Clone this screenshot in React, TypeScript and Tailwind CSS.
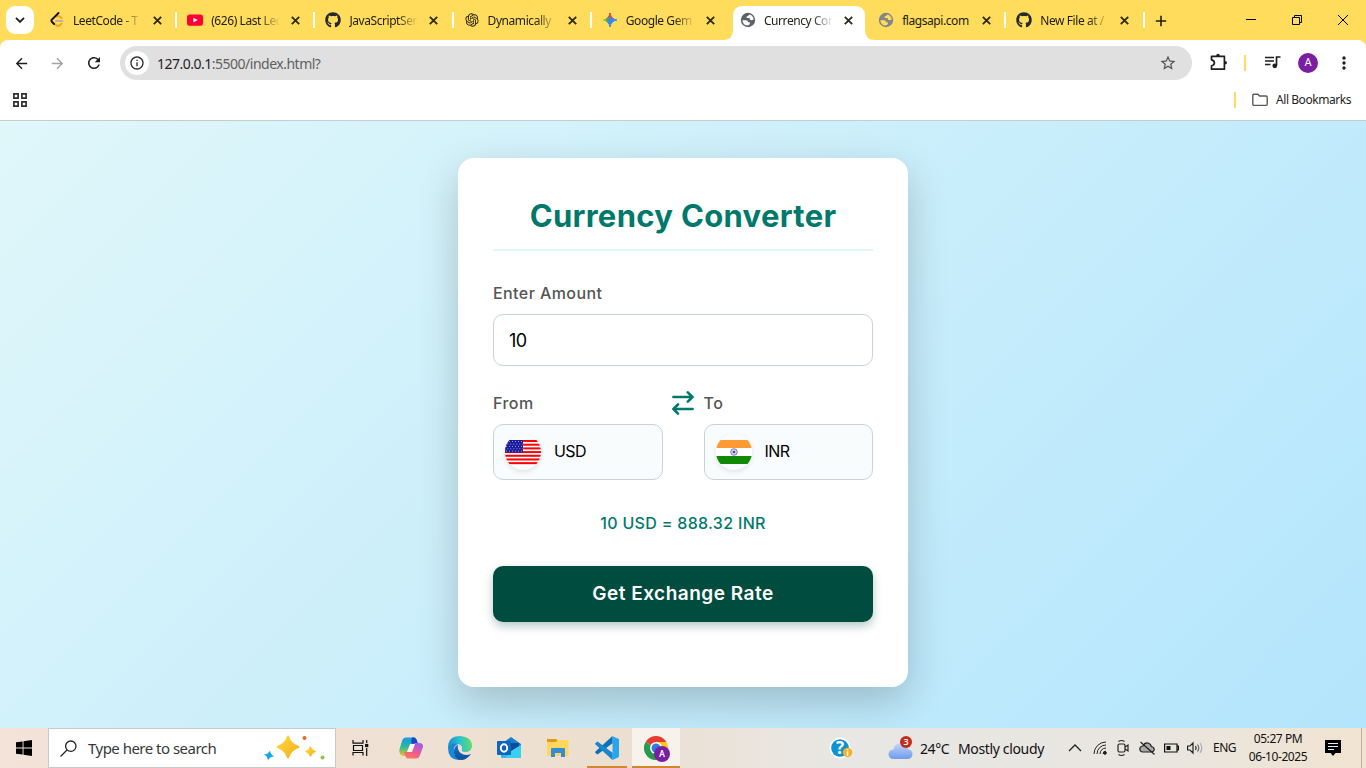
import React from "react";
import { FaGithub } from "react-icons/fa";
import { RiOpenaiFill } from "react-icons/ri";
import {
  MdArrowBack,
  MdArrowForward,
  MdRefresh,
  MdStarBorder,
  MdMoreVert,
  MdAdd,
  MdOutlineInfo,
} from "react-icons/md";

const LeetIcon = () => (
  <svg width="16" height="16" viewBox="0 0 16 16" fill="none" strokeLinecap="round" strokeWidth="1.9">
    <path d="M12.6 6.2 10.9 4.6Q9 3.400 7.500 4.600" stroke="#f5a31a" />
    <path d="M12.500 11.600 10.800 13.200Q9 14.600 7 13.200L3.500 10" stroke="#f5a31a" />
    <path d="M9.500 1 2.700 7.800Q1.900 9 3.200 10.200L5 12" stroke="#111" />
    <path d="M7 9H13.500" stroke="#b9b3a6" />
  </svg>
);
const YoutubeIcon = () => (
  <svg width="16" height="16" viewBox="0 0 16 16">
    <rect x="0" y="2.400" width="16" height="11.300" rx="2.800" fill="#ff0033" />
    <path d="M6.400 5.700 10.600 8 6.400 10.400Z" fill="#fff" />
  </svg>
);
const GeminiIcon = () => (
  <svg width="16" height="16" viewBox="0 0 16 16">
    <defs>
      <linearGradient id="gem" x1="0" y1="0.300" x2="1" y2="0.600">
        <stop offset="0" stopColor="#f7c325" />
        <stop offset="0.350" stopColor="#35a46b" />
        <stop offset="0.550" stopColor="#3186ff" />
        <stop offset="1" stopColor="#4285f4" />
      </linearGradient>
      <linearGradient id="gemTop" x1="0" y1="0" x2="0" y2="1">
        <stop offset="0" stopColor="#f0443a" />
        <stop offset="0.250" stopColor="#f0443a" stopOpacity="0.750" />
        <stop offset="0.450" stopColor="#f0443a" stopOpacity="0" />
      </linearGradient>
    </defs>
    <path d="M8 1Q8.900 7.100 15 8 8.900 8.900 8 15 7.100 8.900 1 8 7.100 7.100 8 1Z" fill="url(#gem)" stroke="url(#gem)" />
    <path d="M8 1Q8.900 7.100 15 8 8.900 8.900 8 15 7.100 8.900 1 8 7.100 7.100 8 1Z" fill="url(#gemTop)" stroke="url(#gemTop)" />
  </svg>
);
const GlobeIcon = ({ color, land }: { color: string; land: string }) => (
  <svg width="16" height="16" viewBox="0 0 16 16">
    <circle cx="8" cy="8" r="7.200" fill={color} />
    <path d="M2.200 8.200 6 8.300Q8 8.400 8.200 10.200L9.800 10.300V12Q9.300 13.200 7.200 13.600 3 12.800 2.200 8.200Z" fill={land} />
    <path d="M9.800 2.400Q8.200 2.700 8.300 4.100L6.700 4.300V6H9.600L10 7.700 11.600 8.300 13.800 7.400Q13.200 3.800 9.800 2.400Z" fill={land} />
  </svg>
);

type Tab = { title: string; icon: React.ReactNode; active?: boolean; sep?: boolean; whole?: boolean };
const tabs: Tab[] = [
  { title: "LeetCode - T", icon: <LeetIcon />, sep: true },
  { title: "(626) Last Lec", icon: <YoutubeIcon />, sep: true },
  { title: "JavaScriptSer", icon: <FaGithub size={16} color="#24292f" />, sep: true },
  { title: "Dynamically", icon: <RiOpenaiFill size={16} color="#1b1a12" />, sep: true },
  { title: "Google Gem", icon: <GeminiIcon /> },
  { title: "Currency Cor", icon: <GlobeIcon color="#5f6368" land="#fff" />, active: true },
  { title: "flagsapi.com", icon: <GlobeIcon color="#85858a" land="#ffdc5c" />, sep: true, whole: true },
  { title: "New File at /", icon: <FaGithub size={16} color="#24292f" />, sep: true },
];

function TabItem({ tab }: { tab: Tab }) {
  return (
    <div className="relative flex h-[34px] w-[138.2px] shrink-0 items-center pb-[6px]">
      {tab.active && (
        <svg className="absolute top-0 -left-[7px]" width="152" height="34" viewBox="0 0 152 34">
          <path d="M0 34Q10 34 10 24V10Q10 0 20 0H132Q142 0 142 10V24Q142 34 152 34Z" fill="#fff" />
        </svg>
      )}
      <div className="relative ml-[10px] flex h-7 w-4 items-center">{tab.icon}</div>
      <div
        className={
          tab.whole
            ? "relative ml-2 w-[69px]"
            : "relative ml-2 w-[69px] overflow-hidden [mask-image:linear-gradient(to_right,black_70%,transparent)]"
        }
      >
        <span className="block pt-px text-[12px] leading-7 tracking-[-0.43px] whitespace-nowrap text-[#22211c]">{tab.title}</span>
      </div>
      <svg className="relative ml-[11px]" width="9" height="9" fill="none" stroke="#2b2920" strokeWidth="1.800">
        <path d="M.8.800 8.200 8.200M8.200.800.8 8.200" />
      </svg>
      {tab.sep && <div className="absolute top-1.5 right-0 h-4 w-0.5 bg-white" />}
    </div>
  );
}

function Browser() {
  return (
    <header className="h-[121px] bg-[#ffdc5c]">
      <div className="flex h-10 items-start pt-1.5 pl-1.5">
        <div className="flex h-7 w-7 items-center justify-center rounded-[9px] bg-white">
          <svg width="10" height="8" viewBox="0 0 10 8" fill="none" stroke="#222" strokeWidth="1.900">
            <path d="M1 1.800 5 5.800 9 1.800" />
          </svg>
        </div>
        <div className="ml-[5px] flex">
          {tabs.map((t, i) => (
            <TabItem key={i} tab={t} />
          ))}
        </div>
        <svg className="mt-[9px] ml-[10px]" width="12" height="12" stroke="#1f1e18" strokeWidth="1.600">
          <path d="M6 .8V11.200M.8 6H11.200" />
        </svg>
        <div className="mt-[8px] ml-auto flex items-center gap-[34px] pr-[17px] text-black">
          <svg width="12" height="12"><path d="M1 5.500H11" stroke="currentColor" /></svg>
          <svg width="12" height="12" fill="none" stroke="currentColor">
            <path d="M1.500 3.500H8.500V10.500H1.500ZM3.500 3.500V1.500H10.500V8.500H8.500" />
          </svg>
          <svg width="12" height="12" stroke="currentColor"><path d="M1 1 11 11M11 1 1 11" /></svg>
        </div>
      </div>
      <div className="h-[81px] rounded-t-[8px] border-b border-[#c9cccd] bg-white">
        <div className="flex h-[46px] items-center pl-[13px]">
          <MdArrowBack size={17} color="#1f1f1f" />
          <MdArrowForward className="ml-[19px]" size={17} color="#a3a3a3" />
          <MdRefresh className="ml-[19px]" size={18} color="#1f1f1f" />
          <div className="ml-[17px] flex h-[34px] w-[1072px] items-center rounded-full bg-[#e0e0e0] px-[5px]">
            <div className="flex h-6 w-6 items-center justify-center rounded-full bg-white">
              <MdOutlineInfo size={16} color="#2b2b2b" />
            </div>
            <span className="ml-2 text-[14px] tracking-[-0.5px] text-[#606060]">
              <span className="text-[#1f1f1f]">127.0.0.1</span>:5500/index.html?
            </span>
            <MdStarBorder className="mr-[10px] ml-auto" size={18} color="#505050" />
          </div>
          <svg className="mb-0.5 ml-[18px]" width="18" height="18" fill="none" stroke="#1f1f1f" strokeWidth="1.700" strokeLinejoin="round">
            <path d="M1.500 3.400H14.400V16.200H1.500V12.800Q4.400 12.300 4.400 9.800 4.400 7.300 1.500 6.800Z" />
            <path d="M6.200 3Q6.200.800 8 .8 9.800.800 9.800 3ZM14.800 8Q17 8 17 9.800 17 11.600 14.800 11.600Z" fill="#1f1f1f" stroke="none" />
          </svg>
          <div className="ml-4 h-4 w-0.5 bg-[#ffdc5c]" />
          <svg className="mb-0.5 ml-[19px]" width="17" height="14" fill="none" stroke="#1f1f1f" strokeWidth="1.700">
            <path d="M0 2.500H9M0 6H9M0 9.500H5.500M11.500 10.500V2H15.500" />
            <circle cx="9.800" cy="10.800" r="2.400" fill="#1f1f1f" stroke="none" />
          </svg>
          <div className="ml-[16px] flex h-5 w-5 items-center justify-center rounded-full bg-[#7b1fa2] font-['Roboto',sans-serif] text-[11px] text-white">A</div>
          <MdMoreVert className="ml-4" size={20} color="#1f1f1f" />
        </div>
        <div className="flex h-[28px] items-center pr-[15px] pl-[13px]">
          <svg width="14" height="14" fill="none" stroke="#303030" strokeWidth="1.700">
            <path d="M.9.900H5.100V5.100H.9ZM8.900.900H13.100V5.100H8.900ZM.9 8.900H5.100V13.100H.9ZM8.900 8.900H13.100V13.100H8.900Z" />
          </svg>
          <div className="ml-auto h-4 w-0.5 bg-[#ffdc5c]" />
          <svg className="ml-4" width="16" height="14" fill="none" stroke="#5a5a5a" strokeWidth="1.400">
            <path d="M.8 2.500Q.8 1.200 2 1.200H5.800L7.600 3H14Q15.200 3 15.200 4.200V11.200Q15.200 12.400 14 12.400H2Q.8 12.400.8 11.200Z" />
          </svg>
          <span className="ml-2 text-[12px] tracking-[-0.45px] text-[#1f1f1f]">All Bookmarks</span>
        </div>
      </div>
    </header>
  );
}

const stripes = [0, 1, 2, 3, 4, 5, 6];
const UsFlag = () => (
  <svg width="36" height="36" viewBox="0 0 36 36">
    <clipPath id="us"><circle cx="18" cy="18" r="18" /></clipPath>
    <g clipPath="url(#us)">
      <rect y="6" width="36" height="24" fill="#fff" />
      {stripes.map((i) => (
        <rect key={i} y={6 + i * 3.692} width="36" height="2" fill="#f00" />
      ))}
      <rect y="6" width="18" height="12.500" fill="#1a1a9c" />
      {[0, 1, 2, 3, 4].map((r) =>
        [0, 1, 2, 3, 4, 5].map((c) => (
          <circle key={`${r}-${c}`} cx={1.500 + c * 3 + (r % 2) * 1.400} cy={7.500 + r * 2.400} r="0.500" fill="#c9c9ee" />
        )),
      )}
    </g>
  </svg>
);
const InFlag = () => (
  <svg width="36" height="36" viewBox="0 0 36 36">
    <clipPath id="in"><circle cx="18" cy="18" r="18" /></clipPath>
    <g clipPath="url(#in)">
      <rect y="6" width="36" height="8" fill="#ff9933" />
      <rect y="14" width="36" height="8" fill="#fff" />
      <rect y="22" width="36" height="8" fill="#128807" />
      <circle cx="18" cy="18" r="3.300" fill="#d5d5ee" stroke="#7474bb" strokeWidth="0.900" />
      <circle cx="18" cy="18" r="1.300" fill="#4a4aa6" />
    </g>
  </svg>
);

function Select({ label, code, flag }: { label: string; code: string; flag: React.ReactNode }) {
  return (
    <div className="w-[169.500px]">
      <div className="h-[34px] pt-px text-[16px] leading-6 font-medium tracking-[0.45px] text-[#555]">{label}</div>
      <div className="flex h-14 items-center rounded-[10px] border border-[#c8d3d8] bg-[#f8fcfd] pl-[11px]">
        <div className="h-9 w-9 rounded-full shadow-[0_2px_5px_rgba(0,0,0,0.1)]">{flag}</div>
        <span className="ml-[13px] pb-0.5 text-[16px] tracking-[-0.6px] text-black">{code}</span>
      </div>
    </div>
  );
}

function Converter() {
  return (
    <main className="flex h-[607px] justify-center overflow-hidden bg-[linear-gradient(135deg,#e0f7fa,#b3e5fc)] pt-[37px] font-['Inter','Liberation_Sans',sans-serif]">
      <div className="h-[529px] w-[450px] rounded-[16px] bg-white px-[35px] pt-[35px] shadow-[0_15px_40px_rgba(0,0,0,0.2)]">
        <h1 className="h-[58px] border-b-2 border-[#e0f7fa] text-center text-[31px] leading-[45px] font-bold tracking-[0.32px] whitespace-nowrap text-[#00796b]">
          Currency Converter
        </h1>
        <div className="mt-[30px] h-[33px] text-[16px] leading-6 font-medium tracking-[0.42px] text-[#555]">Enter Amount</div>
        <div className="flex h-[52px] items-center rounded-[10px] border border-[#c8d3d8] pl-[15px] text-[18px] tracking-[-0.5px] text-black">10</div>
        <div className="mt-6 flex justify-between">
          <Select label="From" code="USD" flag={<UsFlag />} />
          <svg className="mt-px" width="22" height="24" viewBox="0 0 22 24" fill="none" stroke="#00796b" strokeWidth="2.600" strokeLinecap="round" strokeLinejoin="round">
            <path d="M1.400 6H20.500M15.800 1.400 20.500 6 15.800 10.600M20.600 18H1.400M6 13.400 1.400 18 6 22.600" />
          </svg>
          <Select label="To" code="INR" flag={<InFlag />} />
        </div>
        <div className="mt-[29px] h-7 text-center text-[16px] leading-7 font-medium tracking-[0.32px] text-[#00796b]">10 USD = 888.32 INR</div>
        <div className="mt-[29px] flex h-14 items-center justify-center rounded-[10px] bg-[#004d40] text-[19px] font-semibold tracking-[0.5px] text-white shadow-[0_4px_10px_rgba(0,77,64,0.3)]">
          Get Exchange Rate
        </div>
      </div>
    </main>
  );
}

const Copilot = () => (
  <svg width="26" height="24" viewBox="0 0 26 24">
    <defs>
      <linearGradient id="cpa" x1="0" y1="0" x2="0" y2="1"><stop offset="0" stopColor="#179be8" /><stop offset=".5" stopColor="#29b99a" /><stop offset="1" stopColor="#eec51f" /></linearGradient>
      <linearGradient id="cpb" x1="0" y1="1" x2=".3" y2="0"><stop offset="0" stopColor="#fb8054" /><stop offset=".5" stopColor="#ee5b90" /><stop offset="1" stopColor="#a85be0" /></linearGradient>
    </defs>
    <path d="M8 1.500H16Q18 1.500 19 5L20 8H14L10 18Q9 20 7 20H5Q1 19 1.300 14L4 5Q5 1.500 8 1.500Z" fill="url(#cpa)" />
    <path d="M13 1.500H16Q18 1.500 19 5L20 8H15Q12 8 14 1.500Z" fill="#1748c6" />
    <path d="M18 22.500H10Q8 22.500 7 19L6 16H12L16 7H21Q25.500 7 25 11L22 19Q21 22.500 18 22.500Z" fill="url(#cpb)" />
    <path d="M12 8H17L14 16H9Z" fill="#fff6ef" />
  </svg>
);
const Edge = () => (
  <svg width="24" height="24" viewBox="0 0 24 24">
    <defs>
      <linearGradient id="ea" x1="0" y1=".5" x2="1" y2=".4"><stop offset="0" stopColor="#168bd5" /><stop offset=".5" stopColor="#2cc1d2" /><stop offset="1" stopColor="#67dc61" /></linearGradient>
      <linearGradient id="eb" x1="0" y1="0" x2="0" y2="1"><stop offset="0" stopColor="#1b75c4" /><stop offset="1" stopColor="#0d4d9d" /></linearGradient>
    </defs>
    <path d="M0 12Q0 0 12 0 24 1 24 10 23.500 16 17 16 13 16 14 13.500 15 9 10 8 3 8 0 12Z" fill="url(#ea)" />
    <path d="M0 12Q3 6 10 8 5 10 6 17 7 22 14 24 0 25 0 12Z" fill="#1688d4" />
    <path d="M10 8.500Q5 12 6 17 7 24 14 24 19 23.500 23 18 17 20.500 12.500 17 9 14 10 8.500Z" fill="url(#eb)" />
  </svg>
);
const Outlook = () => (
  <svg width="24" height="24" viewBox="0 0 24 24">
    <path d="M4 8 14 1 24 8V20Q24 22 22 22H6Q4 22 4 20Z" fill="#1682cd" />
    <path d="M6 7H22V15L14 19 6 15Z" fill="#0b4d9b" />
    <path d="M4 11 14 16 24 9V20Q24 22 22 22H6Q4 22 4 20Z" fill="#32b9ea" />
    <path d="M14 15 24 9V20Q24 22 22 22H9Z" fill="#39cef2" />
    <rect y="5" width="14" height="14" rx="1" fill="#0f66bd" />
    <ellipse cx="7" cy="12" rx="3.200" ry="3.700" fill="none" stroke="#fff" strokeWidth="1.900" />
  </svg>
);
const Explorer = () => (
  <svg width="22" height="20" viewBox="0 0 22 20">
    <path d="M0 1H9L11 3H21V8H0Z" fill="#dc9b10" />
    <path d="M0 4H9L11 2H21.500V18H0Z" fill="#ffd75e" />
    <path d="M4 19V11Q4 10 5 10H17Q18 10 18 11V19H14V15H8V19Z" fill="#358cd2" />
  </svg>
);
const Code = () => (
  <svg width="24" height="24" viewBox="0 0 24 24">
    <path d="M17.500.300 24 3V21L17.500 24Z" fill="#29a5ee" />
    <path d="M17.500 0V7.200L2.500 18.500.500 17Q-.2 16.300.500 15.500Z" fill="#0a70b8" />
    <path d="M17.500 24V16.800L2.500 5.500.500 7Q-.2 7.700.500 8.500Z" fill="#1687cb" />
  </svg>
);
const Chrome = () => (
  <svg width="27" height="27" viewBox="0 0 27 27">
    <path d="M12 12 1.600 6A12 12 0 0 1 22.400 6Z" fill="#e53d31" />
    <path d="M12 12 1.600 6A12 12 0 0 0 12 24L17 14Z" fill="#269b4b" />
    <path d="M12 12V6H22.400A12 12 0 0 1 12 24Z" fill="#fcc61c" />
    <circle cx="12" cy="12" r="6" fill="#fff" />
    <circle cx="12" cy="12" r="4.500" fill="#3477e5" />
    <circle cx="18" cy="18" r="8" fill="#7b1fa2" />
    <text x="18" y="21.300" textAnchor="middle" fill="#fff" fontFamily="Roboto" fontWeight="500" fontSize="9">A</text>
  </svg>
);

const star = "M0 -10Q2.500 -2.500 10 0 2.500 2.500 0 10 -2.500 2.500 -10 0 -2.500 -2.500 0 -10Z";

function Taskbar() {
  return (
    <footer className="flex h-10 items-center bg-[linear-gradient(to_right,#f3e3d8,#ecdfd0_45%,#e8e7e4_62%,#e9e6e0_85%,#f1e3d0)] text-[#111]">
      <div className="flex w-12 justify-center">
        <svg width="16" height="16"><path d="M0 2.300 6.600 1.400V7.500H0ZM7.500 1.300 16 0V7.500H7.500ZM0 8.400H6.600V14.600L0 13.700ZM7.500 8.400H16V16L7.500 14.800Z" /></svg>
      </div>
      <div className="flex h-10 w-72 items-center border border-[#c9c9c9] bg-white pl-[11px]">
        <svg width="17" height="17" fill="none" stroke="#222" strokeWidth="1.300"><circle cx="10.800" cy="6.200" r="5.200" /><path d="M7 10 .500 16.500" /></svg>
        <span className="ml-[11px] text-[15px] tracking-[-0.52px] whitespace-nowrap text-[#383838]">Type here to search</span>
        <svg className="mr-[7px] ml-auto" width="64" height="28" viewBox="0 0 64 28">
          <defs><linearGradient id="st" x1="0" y1="0" x2="1" y2="1"><stop stopColor="#ffda42" /><stop offset="1" stopColor="#f5ae17" /></linearGradient></defs>
          <g fill="url(#st)" stroke="url(#st)" strokeWidth="2" strokeLinejoin="round">
            <path d={star} transform="translate(24 13) scale(1.040)" />
            <path d={star} transform="translate(46.500 17.500) scale(.5)" />
          </g>
          <path d={star} transform="translate(5 21.500) rotate(12) scale(.36)" fill="#12a5e8" stroke="#12a5e8" strokeWidth="3" />
          <circle cx="40.500" cy="4" r="2" fill="#f0632b" />
          <circle cx="58.500" cy="23.500" r="2" fill="#8dc63f" />
        </svg>
      </div>
      <div className="flex h-10">
        <div className="flex w-12 items-center justify-center">
          <svg width="17" height="16" fill="none" stroke="#111" strokeWidth="1.200"><path d="M1 0V3.200H11V0M1 15.500V12.500H11V15.500M1.500 5.500H10.500V10.500H1.500ZM14.700 0V3M14.700 8V16" /><rect x="13.700" y="4.500" width="2" height="2" fill="#111" /></svg>
        </div>
        <div className="ml-[3px] flex w-12 items-center justify-center"><Copilot /></div>
        <div className="ml-px flex w-12 items-center justify-center"><Edge /></div>
        <div className="ml-px flex w-12 items-center justify-center"><Outlook /></div>
        <div className="ml-px flex w-12 items-center justify-center"><Explorer /></div>
        <div className="mx-[5px] flex w-10 items-center justify-center border-b-2 border-[#d08632] pt-0.5"><Code /></div>
        <div className="flex w-12 items-center justify-center border-b-2 border-[#d08632] bg-[#f7f2ec] pt-1 pl-0.5"><Chrome /></div>
      </div>
      <div className="ml-[149px] flex h-10 items-center">
        <svg width="24" height="24" viewBox="0 0 24 24">
          <circle cx="11" cy="12" r="10.500" fill="#fff" /><circle cx="11" cy="12" r="8.800" fill="#0d92d2" />
          <text x="11" y="18" textAnchor="middle" fontFamily="Open Sans" fontWeight="700" fontSize="17" fill="#fff">?</text>
          <circle cx="18.500" cy="16.500" r="4.700" fill="#f4b022" /><path d="M18.500 13V14.200M18.500 15.300V20" stroke="#fff" strokeWidth="1.500" />
        </svg>
        <div className="relative ml-[35px] h-7 w-[26px]">
          <svg width="26" height="28" viewBox="0 0 26 28">
            <defs><linearGradient id="cl" x1="0" y1="0" x2="0" y2="1"><stop stopColor="#c3d5f8" /><stop offset="1" stopColor="#6f9cec" /></linearGradient></defs>
            <path d="M6 25Q.500 25 .500 20 1 15.500 5.500 15.500 7 9 13 9 19 9 20 15 24.500 16 24.500 20 24.500 25 19 25Z" fill="url(#cl)" />
          </svg>
          <div className="absolute top-0.5 left-[12px] flex h-3 w-3 items-center justify-center rounded-full bg-[#c42b1c] text-[9px] font-semibold text-white">3</div>
        </div>
        <span className="ml-[6px] w-[38px] text-[14px] tracking-[-0.4px] whitespace-nowrap">24°C</span>
        <span className="w-[87px] text-[14px] tracking-[-0.35px] whitespace-nowrap">Mostly cloudy</span>
      </div>
      <div className="ml-[23px] flex items-center">
        <svg width="14" height="10" fill="none" stroke="#222" strokeWidth="1.300"><path d="M1 8 7 2 13 8" /></svg>
        <svg className="ml-[11px]" width="14" height="14" fill="none" stroke="#222"><path d="M1 13A12 12 0 0 1 13 1M4 13A9 9 0 0 1 13 4M7 13A6 6 0 0 1 13 7M10 13A3 3 0 0 1 13 10" /><circle cx="12" cy="12" r="1.300" fill="#222" /></svg>
        <svg className="ml-[9px]" width="14" height="18" fill="none" stroke="#222" strokeWidth="1.200"><rect x="2" y="5" width="7" height="8" rx="1.500" /><path d="M9 8 12 6V12L9 10M2.500 2.500Q5.500.500 8.500 2.500M2.500 15.500Q5.500 17.500 8.500 15.500" /></svg>
        <svg className="ml-[9px]" width="16" height="14" stroke="#222" strokeWidth="1.200"><path d="M4 11Q.800 11 .800 7.500 1.500 5 4 5 5.500 1.500 9 2 12 3 12.300 5.500 15.500 6 15.200 9 14.500 11 12 11Z" fill="#a9a9a8" /><path d="M1.500 1 15.500 13.500" /></svg>
        <svg className="ml-[9px]" width="15" height="10" fill="none" stroke="#111" strokeWidth="1.200"><path d="M.6 1H13V9H.6ZM13 3H14.400V7H13" /><rect x="2.500" y="3" width="4" height="4" fill="#111" stroke="none" /></svg>
        <svg className="ml-2" width="17" height="14" fill="none" stroke="#222" strokeWidth="1.200"><path d="M.6 5H3L6 2V12L3 9H.6ZM8.500 5Q9.800 7 8.500 9" /><path d="M10.500 3.500Q13 7 10.500 10.500" stroke="#666" /><path d="M13 2Q16.500 7 13 12" stroke="#aaa" /></svg>
        <span className="ml-[9px] w-6 text-[12px] tracking-[-0.5px]">ENG</span>
        <div className="ml-[10px] w-[62px] text-center text-[12px] leading-[18px] tracking-[-0.42px] whitespace-nowrap">
          <div>05:27 PM</div>
          <div>06-10-2025</div>
        </div>
        <svg className="ml-4" width="16" height="16"><path d="M0 0H16V13H10.500L8 16 5.500 13H0Z" /><path d="M3 3.500H13M3 6.500H13M3 9.500H9" stroke="#eee" /></svg>
      </div>
      <div className="ml-auto mr-1 h-10 w-px bg-[#b7afa4]" />
    </footer>
  );
}

export default function App() {
  return (
    <div className="h-[768px] w-[1366px] overflow-hidden font-['Noto_Sans','Open_Sans',sans-serif]">
      <Browser />
      <Converter />
      <Taskbar />
    </div>
  );
}
